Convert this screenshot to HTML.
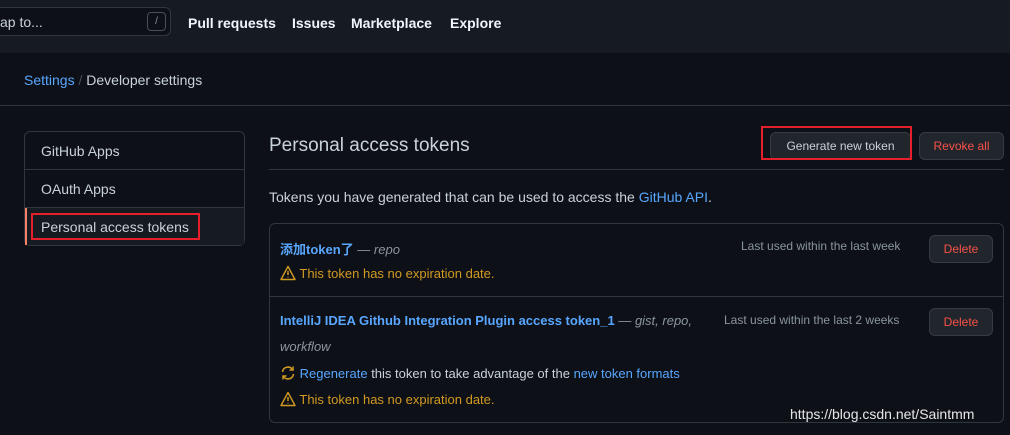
<!DOCTYPE html>
<html><head><meta charset="utf-8"><style>
*{box-sizing:border-box;margin:0;padding:0}
body{width:1010px;height:435px;overflow:hidden;background:#0d1117;font-family:"Liberation Sans","Noto Sans CJK SC",sans-serif;color:#c9d1d9;font-size:14px;position:relative}
.a{position:absolute;white-space:nowrap}
.hdr{position:absolute;left:0;top:0;width:1010px;height:53px;background:#161b22}
.sub{position:absolute;left:0;top:53px;width:1010px;height:53px;background:#0d1117;border-bottom:1px solid #30363d}
.blue{color:#58a6ff}
.warn{color:#d29922;font-size:13px}
.btn{position:absolute;background:#21262d;border:1px solid #363b42;border-radius:6px;font-size:12px;text-align:center;color:#c9d1d9}
.red{color:#f85149}
.box{position:absolute;border:1px solid #30363d;border-radius:6px}
.rb{position:absolute;border:2px solid #e5202a}
.muted{color:#8b949e}
svg{vertical-align:-3px}
</style></head><body>
<div class="hdr"></div>
<div class="a" style="left:-10px;top:7px;width:181px;height:29px;border:1px solid #30363d;border-radius:6px;background:#0d1117"></div>
<div class="a" style="left:0;top:14px;font-size:14px;color:#c9d1d9">ap to...</div>
<div class="a" style="left:147px;top:12px;width:19px;height:19px;border:1px solid #484f58;border-radius:4px;font-size:10px;text-align:center;line-height:17px;color:#8b949e">/</div>
<div class="a" style="left:188px;top:15px;font-weight:bold;color:#f0f6fc">Pull requests</div>
<div class="a" style="left:292px;top:15px;font-weight:bold;color:#f0f6fc">Issues</div>
<div class="a" style="left:351px;top:15px;font-weight:bold;color:#f0f6fc">Marketplace</div>
<div class="a" style="left:450px;top:15px;font-weight:bold;color:#f0f6fc">Explore</div>
<div class="sub"></div>
<div class="a" style="left:24px;top:72px"><span class="blue">Settings</span> <span style="color:#484f58">/</span> Developer settings</div>

<div class="box" style="left:24px;top:131px;width:221px;height:115px"></div>
<div class="a" style="left:25px;top:169px;width:219px;border-top:1px solid #30363d"></div>
<div class="a" style="left:25px;top:207px;width:219px;border-top:1px solid #30363d;height:38px;background:#161b22"></div>
<div class="a" style="left:25px;top:208px;width:2px;height:37px;background:#f78166"></div>
<div class="a" style="left:41px;top:143px">GitHub Apps</div>
<div class="a" style="left:41px;top:181px">OAuth Apps</div>
<div class="a" style="left:41px;top:219px">Personal access tokens</div>
<div class="rb" style="left:31px;top:213px;width:169px;height:27px"></div>

<div class="a" style="left:269px;top:135px;font-size:19px;color:#c9d1d9">Personal access tokens</div>
<div class="a" style="left:269px;top:169px;width:735px;border-top:1px solid #30363d"></div>
<div class="btn" style="left:770px;top:132px;width:141px;height:28px;line-height:26px">Generate new token</div>
<div class="rb" style="left:761px;top:126px;width:151px;height:34px"></div>
<div class="btn red" style="left:919px;top:132px;width:85px;height:28px;line-height:26px">Revoke all</div>
<div class="a" style="left:269px;top:189px">Tokens you have generated that can be used to access the <span class="blue">GitHub API</span>.</div>

<div class="box" style="left:269px;top:223px;width:735px;height:200px"></div>
<div class="a" style="left:270px;top:296px;width:733px;border-top:1px solid #30363d"></div>
<div class="a" style="left:280px;top:239px;font-size:13px"><b class="blue">添加token了</b> <i class="muted">— repo</i></div>
<div class="a warn" style="left:280px;top:265px"><svg width="16" height="16" viewBox="0 0 16 16"><path d="M8 1.5L15 14.5H1Z" fill="none" stroke="#d29922" stroke-width="1.4" stroke-linejoin="round"/><path d="M8 6v4M8 11.8v.6" stroke="#d29922" stroke-width="1.5"/></svg> This token has no expiration date.</div>
<div class="a muted" style="left:741px;top:239px;font-size:12px">Last used within the last week</div>
<div class="btn red" style="left:929px;top:235px;width:64px;height:28px;line-height:26px">Delete</div>
<div class="a" style="left:280px;top:313px;font-size:13px"><b class="blue">IntelliJ IDEA Github Integration Plugin access token_1</b> <i class="muted">— gist, repo,</i></div>
<div class="a muted" style="left:280px;top:339px;font-size:13px;font-style:italic">workflow</div>
<div class="a" style="left:280px;top:365px;font-size:13px"><svg width="16" height="16" viewBox="0 0 16 16"><path d="M2.5 7A5.5 5.5 0 0 1 12.5 4.5M13.5 9A5.5 5.5 0 0 1 3.5 11.5" fill="none" stroke="#d29922" stroke-width="1.5"/><path d="M13 1.5v3.5h-3.5M3 14.5v-3.5h3.5" fill="none" stroke="#d29922" stroke-width="1.5"/></svg> <span class="blue">Regenerate</span> this token to take advantage of the <span class="blue">new token formats</span></div>
<div class="a warn" style="left:280px;top:391px"><svg width="16" height="16" viewBox="0 0 16 16"><path d="M8 1.5L15 14.5H1Z" fill="none" stroke="#d29922" stroke-width="1.4" stroke-linejoin="round"/><path d="M8 6v4M8 11.8v.6" stroke="#d29922" stroke-width="1.5"/></svg> This token has no expiration date.</div>
<div class="a muted" style="left:724px;top:313px;font-size:12px">Last used within the last 2 weeks</div>
<div class="btn red" style="left:929px;top:308px;width:64px;height:28px;line-height:26px">Delete</div>
<div class="a" style="left:790px;top:406px;font-size:14px;color:#e6e6e6">https://blog.csdn.net/Saintmm</div>
</body></html>
